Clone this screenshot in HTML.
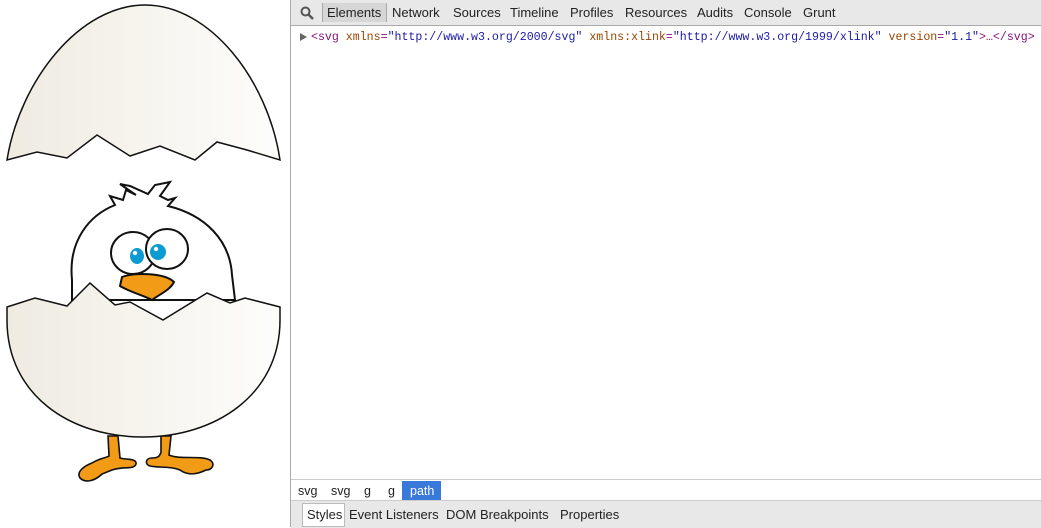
<!DOCTYPE html>
<html><head><meta charset="utf-8"><style>
body{margin:0;width:1041px;height:527px;overflow:hidden;background:#fff;font-family:"Liberation Sans",sans-serif;position:relative}
#art{position:absolute;left:0;top:0}
#dt{position:absolute;left:290px;top:0;width:751px;height:527px;border-left:1px solid #aaa;background:#fff}
#tb{position:absolute;left:0;top:0;width:751px;height:25px;background:#e8e8e8;border-bottom:1px solid #aaa;font-size:13px}
#tb span{position:absolute;top:5px;color:#222}
.code{position:absolute;left:20px;top:31px;font-family:"Liberation Mono",monospace;font-size:11.6px;white-space:pre;color:#881280}
.an{color:#994500}.av{color:#1a1aa6}
#crumbs{position:absolute;left:0;top:479px;width:751px;height:21px;border-top:1px solid #ccc;background:#fff;font-size:12.5px}
#crumbs span{position:absolute;top:4px;color:#222}
#sb{position:absolute;left:0;top:500px;width:751px;height:27px;background:#e8e8e8;border-top:1px solid #ccc;font-size:13px}
#sb span{position:absolute;top:6px;color:#222}
</style></head><body>
<svg id="art" width="290" height="527" viewBox="0 0 290 527">
<defs><linearGradient id="eg" x1="0" x2="1"><stop offset="0" stop-color="#efebe1"/><stop offset="1" stop-color="#fdfdfb"/></linearGradient></defs>
<!-- top shell -->
<path d="M7,160 C20,80 80,5 145,5 C210,5 268,80 280,160 L247,150 L217,142 L195,160 L160,146 L130,156 L97,135 L67,158 L37,152 Z" fill="url(#eg)" stroke="#111" stroke-width="1.5"/>
<!-- feet -->
<g fill="#f29b16" stroke="#111" stroke-width="1.6">
<path d="M108,436 L118,436 L120,458 C126,460 137,458 136,464 C134,470 124,466 112,470 L102,474 C96,480 86,484 80,478 C76,472 84,466 92,463 C100,458 106,458 109,456 Z"/>
<path d="M161,436 L171,436 L169,455 C180,460 200,455 210,460 C216,464 212,470 206,470 C198,474 188,476 180,470 C170,466 160,468 150,466 C144,464 146,458 152,458 C158,458 160,456 161,452 Z"/>
</g>
<!-- head -->
<path d="M72,280 C68,240 90,215 115,205 L110,196 L123,200 L126,190 L136,195 L120,184 L130,186 L148,194 L155,185 L170,182 L160,196 L168,200 L175,198 L168,206 C205,215 230,240 232,275 L235,300 L72,300 Z" fill="#fff" stroke="#111" stroke-width="2"/>
<ellipse cx="133" cy="253" rx="22" ry="21" fill="#fff" stroke="#111" stroke-width="2"/>
<ellipse cx="167" cy="249" rx="21" ry="20" fill="#fff" stroke="#111" stroke-width="2"/>
<ellipse cx="137" cy="256" rx="7" ry="8" fill="#0b9bd1"/>
<ellipse cx="158" cy="252" rx="8" ry="8" fill="#0b9bd1"/>
<circle cx="135" cy="253" r="2.2" fill="#fff"/><circle cx="156" cy="249" r="2.2" fill="#fff"/>
<path d="M122,277 C135,272 165,273 174,282 C170,290 160,294 152,300 C145,296 130,292 120,286 Z" fill="#f29b16" stroke="#111" stroke-width="2"/>
<!-- bottom shell -->
<path d="M7,307 L35,298 L67,306 L90,283 L115,305 L130,302 L163,320 L207,293 L230,303 L245,298 L280,307 L280,320 C280,395 215,437 143,437 C70,437 7,395 7,320 Z" fill="url(#eg)" stroke="#111" stroke-width="1.5"/>
</svg>
<div id="dt">
<div id="tb">
<svg style="position:absolute;left:9px;top:6px" width="14" height="14" viewBox="0 0 14 14"><circle cx="5.5" cy="5.5" r="4" fill="none" stroke="#555" stroke-width="2"/><path d="M8.5,8.5 L13,13" stroke="#555" stroke-width="2.5"/></svg>
<div style="position:absolute;left:31px;top:3px;width:63px;height:19px;background:#d6d6d6;border-left:1px solid #aaa;border-right:1px solid #aaa"></div>
<span style="left:36px">Elements</span><span style="left:101px">Network</span><span style="left:162px">Sources</span><span style="left:219px">Timeline</span><span style="left:279px">Profiles</span><span style="left:334px">Resources</span><span style="left:406px">Audits</span><span style="left:453px">Console</span><span style="left:512px">Grunt</span>
</div>
<div style="position:absolute;left:9px;top:33px;width:0;height:0;border-left:7px solid #666;border-top:4px solid transparent;border-bottom:4px solid transparent"></div>
<div class="code">&lt;svg <span class="an">xmlns</span>=<span class="av">"http://www.w3.org/2000/svg"</span> <span class="an">xmlns:xlink</span>=<span class="av">"http://www.w3.org/1999/xlink"</span> <span class="an">version</span>=<span class="av">"1.1"</span>&gt;…&lt;/svg&gt;</div>
<div id="crumbs">
<span style="left:7px">svg</span><span style="left:40px">svg</span><span style="left:73px">g</span><span style="left:97px">g</span>
<div style="position:absolute;left:111px;top:1px;width:39px;height:20px;background:#3879d9"></div>
<span style="left:119px;color:#fff">path</span>
</div>
<div id="sb">
<div style="position:absolute;left:11px;top:2px;width:41px;height:22px;background:#fff;border:1px solid #bbb"></div>
<span style="left:16px">Styles</span><span style="left:58px">Event Listeners</span><span style="left:155px">DOM Breakpoints</span><span style="left:269px">Properties</span>
</div>
</div>
</body></html>
